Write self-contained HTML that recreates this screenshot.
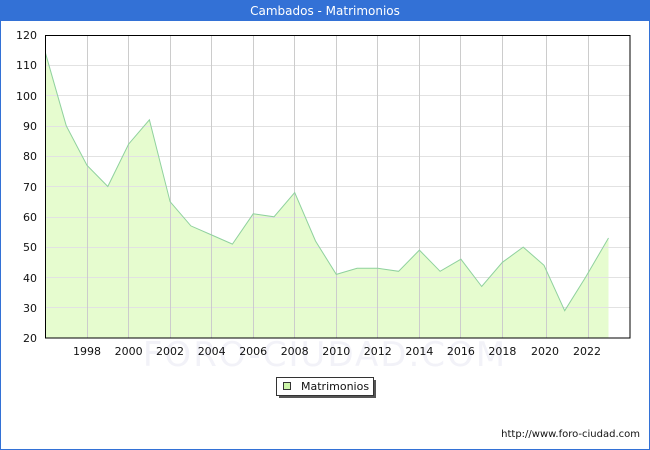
<!DOCTYPE html>
<html><head><meta charset="utf-8"><style>
html,body{margin:0;padding:0;background:#fff;}
svg{display:block;font-family:"DejaVu Sans","Liberation Sans",sans-serif;}
</style></head><body>
<svg width="650" height="450" viewBox="0 0 650 450" xmlns="http://www.w3.org/2000/svg">
<rect x="0" y="0" width="650" height="450" fill="#fff"/>
<rect x="0.5" y="0.5" width="649" height="449" fill="none" stroke="#3371d6" stroke-width="1"/>
<rect x="0" y="0" width="650" height="21" fill="#3371d6"/>
<text x="325" y="15" fill="#fff" font-size="12" text-anchor="middle">Cambados - Matrimonios</text>
<text x="325" y="366" fill="#f2f2f8" font-size="34" text-anchor="middle" letter-spacing="2">FORO-CIUDAD.COM</text>
<polygon fill="#e6fccf" points="45.5,53.2 66.3,125.9 87,165.3 107.8,186.5 128.6,144.1 149.4,119.8 170.1,201.7 190.9,225.9 211.7,235 232.4,244.1 253.2,213.8 274,216.8 294.7,192.6 315.5,241 336.3,274.4 357.1,268.3 377.8,268.3 398.6,271.3 419.4,250.1 440.1,271.3 460.9,259.2 481.7,286.5 502.4,262.3 523.2,247.1 544,265.3 564.7,310.7 585.5,277.4 608.5,238 608.5,338 45.5,338"/>
<g stroke="#e2e2e2" stroke-width="1">
<line x1="45" y1="65.5" x2="630" y2="65.5"/><line x1="45" y1="95.5" x2="630" y2="95.5"/><line x1="45" y1="126.5" x2="630" y2="126.5"/><line x1="45" y1="156.5" x2="630" y2="156.5"/><line x1="45" y1="186.5" x2="630" y2="186.5"/><line x1="45" y1="217.5" x2="630" y2="217.5"/><line x1="45" y1="247.5" x2="630" y2="247.5"/><line x1="45" y1="277.5" x2="630" y2="277.5"/><line x1="45" y1="307.5" x2="630" y2="307.5"/>
</g>
<g stroke="#cccccc" stroke-width="1">
<line x1="87.5" y1="35" x2="87.5" y2="338"/><line x1="128.5" y1="35" x2="128.5" y2="338"/><line x1="170.5" y1="35" x2="170.5" y2="338"/><line x1="211.5" y1="35" x2="211.5" y2="338"/><line x1="253.5" y1="35" x2="253.5" y2="338"/><line x1="294.5" y1="35" x2="294.5" y2="338"/><line x1="336.5" y1="35" x2="336.5" y2="338"/><line x1="377.5" y1="35" x2="377.5" y2="338"/><line x1="419.5" y1="35" x2="419.5" y2="338"/><line x1="460.5" y1="35" x2="460.5" y2="338"/><line x1="502.5" y1="35" x2="502.5" y2="338"/><line x1="546.5" y1="35" x2="546.5" y2="338"/><line x1="588.5" y1="35" x2="588.5" y2="338"/>
</g>
<polyline fill="none" stroke="#8fd19e" stroke-width="1" points="45.5,53.2 66.3,125.9 87,165.3 107.8,186.5 128.6,144.1 149.4,119.8 170.1,201.7 190.9,225.9 211.7,235 232.4,244.1 253.2,213.8 274,216.8 294.7,192.6 315.5,241 336.3,274.4 357.1,268.3 377.8,268.3 398.6,271.3 419.4,250.1 440.1,271.3 460.9,259.2 481.7,286.5 502.4,262.3 523.2,247.1 544,265.3 564.7,310.7 585.5,277.4 608.5,238"/>
<rect x="45.5" y="35.5" width="584.5" height="302.5" fill="none" stroke="#000" stroke-width="1"/>
<g font-size="11" fill="#111" text-anchor="end">
<text x="37" y="39">120</text><text x="37" y="69">110</text><text x="37" y="100">100</text><text x="37" y="130">90</text><text x="37" y="160">80</text><text x="37" y="191">70</text><text x="37" y="221">60</text><text x="37" y="251">50</text><text x="37" y="282">40</text><text x="37" y="312">30</text><text x="37" y="342">20</text>
</g>
<g font-size="11" fill="#111" text-anchor="middle">
<text x="87" y="355">1998</text><text x="128.6" y="355">2000</text><text x="170" y="355">2002</text><text x="211.7" y="355">2004</text><text x="253.2" y="355">2006</text><text x="294.7" y="355">2008</text><text x="336.3" y="355">2010</text><text x="377.8" y="355">2012</text><text x="419.4" y="355">2014</text><text x="460.9" y="355">2016</text><text x="502.4" y="355">2018</text><text x="545" y="355">2020</text><text x="587" y="355">2022</text>
</g>
<rect x="279" y="380" width="97" height="18" fill="#555"/>
<rect x="276.5" y="377.5" width="97" height="18" fill="#fff" stroke="#333" stroke-width="1"/>
<rect x="283.5" y="382.5" width="7" height="7" fill="#ccf5a8" stroke="#333" stroke-width="1"/>
<text x="301" y="390" font-size="11" fill="#111">Matrimonios</text>
<text x="640" y="437" font-size="10" fill="#111" text-anchor="end">http://www.foro-ciudad.com</text>
</svg>
</body></html>
